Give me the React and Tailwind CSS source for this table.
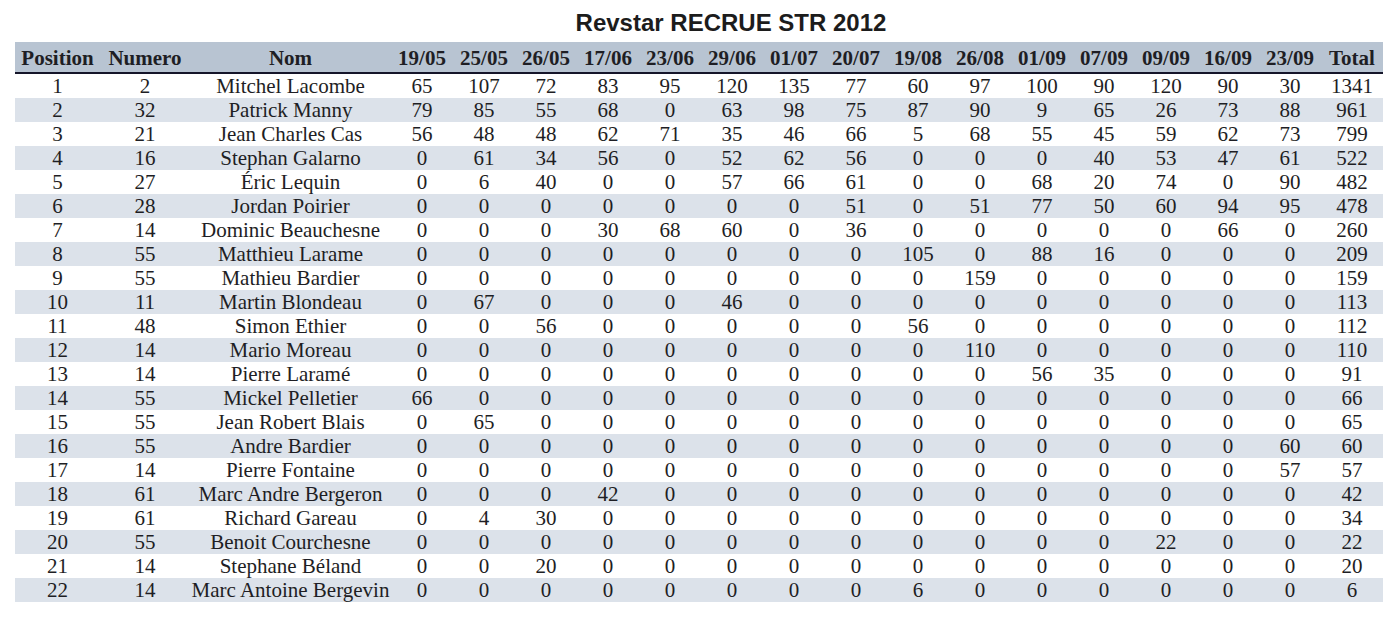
import React from 'react';

const dates = ['19/05', '25/05', '26/05', '17/06', '23/06', '29/06', '01/07', '20/07', '19/08', '26/08', '01/09', '07/09', '09/09', '16/09', '23/09'];

// position, numero, nom, points par course..., total
const rows = [
  [1, 2, 'Mitchel Lacombe', 65, 107, 72, 83, 95, 120, 135, 77, 60, 97, 100, 90, 120, 90, 30, 1341],
  [2, 32, 'Patrick Manny', 79, 85, 55, 68, 0, 63, 98, 75, 87, 90, 9, 65, 26, 73, 88, 961],
  [3, 21, 'Jean Charles Cas', 56, 48, 48, 62, 71, 35, 46, 66, 5, 68, 55, 45, 59, 62, 73, 799],
  [4, 16, 'Stephan Galarno', 0, 61, 34, 56, 0, 52, 62, 56, 0, 0, 0, 40, 53, 47, 61, 522],
  [5, 27, 'Éric Lequin', 0, 6, 40, 0, 0, 57, 66, 61, 0, 0, 68, 20, 74, 0, 90, 482],
  [6, 28, 'Jordan Poirier', 0, 0, 0, 0, 0, 0, 0, 51, 0, 51, 77, 50, 60, 94, 95, 478],
  [7, 14, 'Dominic Beauchesne', 0, 0, 0, 30, 68, 60, 0, 36, 0, 0, 0, 0, 0, 66, 0, 260],
  [8, 55, 'Matthieu Larame', 0, 0, 0, 0, 0, 0, 0, 0, 105, 0, 88, 16, 0, 0, 0, 209],
  [9, 55, 'Mathieu Bardier', 0, 0, 0, 0, 0, 0, 0, 0, 0, 159, 0, 0, 0, 0, 0, 159],
  [10, 11, 'Martin Blondeau', 0, 67, 0, 0, 0, 46, 0, 0, 0, 0, 0, 0, 0, 0, 0, 113],
  [11, 48, 'Simon Ethier', 0, 0, 56, 0, 0, 0, 0, 0, 56, 0, 0, 0, 0, 0, 0, 112],
  [12, 14, 'Mario Moreau', 0, 0, 0, 0, 0, 0, 0, 0, 0, 110, 0, 0, 0, 0, 0, 110],
  [13, 14, 'Pierre Laramé', 0, 0, 0, 0, 0, 0, 0, 0, 0, 0, 56, 35, 0, 0, 0, 91],
  [14, 55, 'Mickel Pelletier', 66, 0, 0, 0, 0, 0, 0, 0, 0, 0, 0, 0, 0, 0, 0, 66],
  [15, 55, 'Jean Robert Blais', 0, 65, 0, 0, 0, 0, 0, 0, 0, 0, 0, 0, 0, 0, 0, 65],
  [16, 55, 'Andre Bardier', 0, 0, 0, 0, 0, 0, 0, 0, 0, 0, 0, 0, 0, 0, 60, 60],
  [17, 14, 'Pierre Fontaine', 0, 0, 0, 0, 0, 0, 0, 0, 0, 0, 0, 0, 0, 0, 57, 57],
  [18, 61, 'Marc Andre Bergeron', 0, 0, 0, 42, 0, 0, 0, 0, 0, 0, 0, 0, 0, 0, 0, 42],
  [19, 61, 'Richard Gareau', 0, 4, 30, 0, 0, 0, 0, 0, 0, 0, 0, 0, 0, 0, 0, 34],
  [20, 55, 'Benoit Courchesne', 0, 0, 0, 0, 0, 0, 0, 0, 0, 0, 0, 0, 22, 0, 0, 22],
  [21, 14, 'Stephane Béland', 0, 0, 20, 0, 0, 0, 0, 0, 0, 0, 0, 0, 0, 0, 0, 20],
  [22, 14, 'Marc Antoine Bergevin', 0, 0, 0, 0, 0, 0, 0, 0, 6, 0, 0, 0, 0, 0, 0, 6],
];

export default function App() {
  return (
    <div className="w-[1400px] h-[625px] bg-white overflow-hidden">
      <div className="h-[42px] pl-[62px] flex items-start justify-center">
        <h1 className="mt-[9px] text-[24px] leading-[28px] font-bold text-[#1c1c1c] font-['Liberation_Sans',Arial,sans-serif]">
          Revstar RECRUE STR 2012
        </h1>
      </div>

      <table className="ml-[15px] w-[1368px] table-fixed border-collapse font-['Liberation_Serif','Times_New_Roman',serif] text-[#1e1e24]">
        <colgroup>
          <col className="w-[85px]" />
          <col className="w-[90px]" />
          <col className="w-[201px]" />
          {dates.map((d) => (
            <col key={d} className="w-[62px]" />
          ))}
          <col className="w-[62px]" />
        </colgroup>
        <thead>
          <tr className="h-[31px] bg-[#b8c4d2] border-b-2 border-[#15152a]">
            <th className="text-[21px] leading-[28px] font-bold text-center p-0 pt-[1px] whitespace-nowrap">Position</th>
            <th className="text-[21px] leading-[28px] font-bold text-center p-0 pt-[1px] whitespace-nowrap">Numero</th>
            <th className="text-[21px] leading-[28px] font-bold text-center p-0 pt-[1px]">Nom</th>
            {dates.map((d) => (
              <th key={d} className="text-[21px] leading-[28px] font-bold text-center p-0 pt-[1px]">{d}</th>
            ))}
            <th className="text-[21px] leading-[28px] font-bold text-center p-0 pt-[1px]">Total</th>
          </tr>
        </thead>
        <tbody>
          {rows.map((r, i) => (
            <tr key={r[0]} className={`h-[24px] ${i % 2 === 1 ? 'bg-[#dce2ea]' : 'bg-white'}`}>
              {r.map((v, j) => (
                <td key={j} className="text-[21px] leading-[24px] text-center p-0 whitespace-nowrap">
                  {v}
                </td>
              ))}
            </tr>
          ))}
        </tbody>
      </table>
    </div>
  );
}
